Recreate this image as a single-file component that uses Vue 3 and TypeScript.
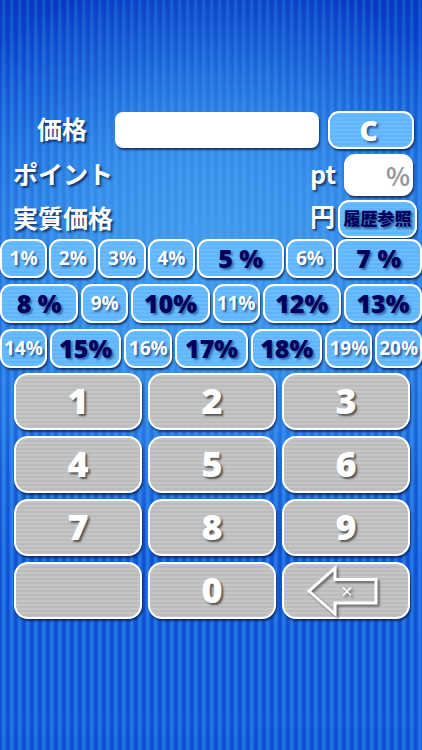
<script setup lang="ts">
import { ref } from 'vue'

interface RateKey {
  rate: number
  major: boolean
  label: string
}

const majors = [5, 7, 8, 10, 12, 13, 15, 17, 18]
const makeRow = (from: number, to: number): RateKey[] =>
  Array.from({ length: to - from + 1 }, (_, i) => {
    const rate = from + i
    const major = majors.includes(rate)
    return { rate, major, label: major && rate < 10 ? `${rate} %` : `${rate}%` }
  })

const rateRows = [
  { name: 'first', keys: makeRow(1, 7) },
  { name: 'second', keys: makeRow(8, 13) },
  { name: 'third', keys: makeRow(14, 20) },
]
const digits = ['1', '2', '3', '4', '5', '6', '7', '8', '9', '', '0']

const price = ref('')
const rate = ref('')

function press(digit: string) {
  price.value += digit
}
function clearAll() {
  price.value = ''
  rate.value = ''
}
function erase() {
  price.value = price.value.slice(0, -1)
}
</script>

<template>
  <main class="app">
    <section class="form">
      <div class="line price-line">
        <label class="caption price-caption" for="price">価格</label>
        <input id="price" v-model="price" class="field price-field" type="text" inputmode="numeric" />
        <button class="key clear" type="button" @click="clearAll">C</button>
      </div>
      <div class="line point-line">
        <label class="caption" for="rate">ポイント</label>
        <span class="caption unit">pt</span>
        <input id="rate" v-model="rate" class="field rate-field" type="text" placeholder="%" />
      </div>
      <div class="line net-line">
        <span class="caption">実質価格</span>
        <span class="caption unit yen">円</span>
        <button class="key history" type="button">履歴参照</button>
      </div>
    </section>

    <section class="rates">
      <div v-for="row in rateRows" :key="row.name" class="rate-row" :class="row.name">
        <button
          v-for="k in row.keys"
          :key="k.rate"
          class="key rate"
          :class="{ major: k.major }"
          type="button"
          @click="rate = String(k.rate)"
        >{{ k.label }}</button>
      </div>
    </section>

    <section class="pad">
      <button v-for="d in digits" :key="d" class="key digit" type="button" @click="press(d)">{{ d }}</button>
      <button class="key digit erase" type="button" @click="erase">
        <svg class="arrow" viewBox="0 0 76 56" width="76" height="56">
          <path d="M4 28 L30 5 V16.500 H71 V40 H30 V51 Z" fill="none" stroke="#fff" stroke-width="3" />
          <path d="M38 24.500 L46 32.500 M46 24.500 L38 32.500" stroke="#fff" stroke-width="1.500" />
        </svg>
      </button>
    </section>
  </main>
</template>

<style>
body {
  margin: 0;
}
</style>

<style scoped>
.app {
  box-sizing: border-box;
  min-height: 100vh;
  padding-top: 110px;
  font-family: "Noto Sans", "Noto Sans CJK JP", sans-serif;
  background:
    radial-gradient(ellipse 75% 38% at 50% 34%, rgba(76, 168, 242, 0.8) 0%, rgba(68, 160, 240, 0.7) 40%, rgba(50, 138, 234, 0.35) 75%, rgba(40, 125, 228, 0) 100%),
    linear-gradient(rgba(0, 30, 170, 0.2), rgba(0, 30, 170, 0) 20%),
    repeating-linear-gradient(90deg, rgba(0, 40, 185, 0.4) 0 1px, rgba(0, 40, 180, 0.15) 1px 2px, rgba(90, 170, 255, 0.1) 2px 3px, rgba(90, 180, 255, 0.2) 3px 5px, rgba(0, 40, 180, 0.1) 5px 6px, rgba(0, 40, 180, 0.2) 6px 7px, rgba(0, 40, 185, 0.4) 7px 8px),
    linear-gradient(#0c4ccf, #1a69df 15%, #2a80e6 30%, #2a80e6 55%, #1a6ae0 75%, #1766dc);
}
.line {
  display: flex;
  align-items: center;
}
.price-line {
  height: 40px;
  padding-right: 8px;
}
.point-line {
  height: 50px;
  padding: 0 9px 0 13px;
}
.net-line {
  height: 38px;
  padding: 0 5px 0 13px;
}
.caption {
  padding-bottom: 4px;
  color: #fff;
  font-family: "Noto Sans CJK JP", sans-serif;
  font-size: 25px;
  font-weight: 700;
  line-height: 34px;
  white-space: nowrap;
  text-shadow: 2px 2px 2px rgba(10, 30, 70, 0.75);
}
.price-caption {
  width: 115px;
  padding-left: 37px;
  box-sizing: border-box;
}
.unit {
  margin-left: auto;
  margin-right: 8px;
}
.yen {
  margin-right: 3px;
  padding-bottom: 8px;
}
.field {
  box-sizing: border-box;
  min-width: 0;
  border: 0;
  outline: 0;
  background: #fff;
  box-shadow: 1px 2px 2px rgba(10, 30, 70, 0.75);
  font: 700 25px "Noto Sans CJK JP", sans-serif;
  text-align: right;
}
.field::placeholder {
  color: #999;
  opacity: 1;
}
.price-field {
  flex: 1;
  height: 36px;
  margin-right: 9px;
  padding: 0 6px;
  border-radius: 8px;
}
.rate-field {
  width: 69px;
  height: 42px;
  padding: 0 3px;
  border-radius: 11px;
}
.key {
  box-sizing: border-box;
  min-width: 0;
  margin: 0;
  padding: 0;
  border: 2px solid #fff;
  border-radius: 11px;
  color: #fff;
  font-family: "Noto Sans", "Noto Sans CJK JP", sans-serif;
  font-weight: 700;
  white-space: nowrap;
  background: repeating-linear-gradient(#69bcff 0 2px, #60b5fb 2px 4px);
  box-shadow: 1px 2px 2px rgba(10, 30, 70, 0.75);
  text-shadow: 2px 2px 2px rgba(10, 40, 90, 0.65);
}
.clear {
  width: 86px;
  height: 38px;
  padding-right: 5px;
  font-family: "Open Sans", sans-serif;
  font-size: 28px;
  font-weight: 800;
  line-height: 30px;
}
.history {
  width: 79px;
  height: 38px;
  padding-bottom: 3px;
  color: #00005c;
  font-family: "Noto Sans CJK JP", sans-serif;
  font-size: 17px;
  font-weight: 900;
}
.rates {
  display: grid;
  gap: 6px;
  padding-top: 1px;
}
.rate-row {
  display: grid;
  gap: 2px;
}
.first {
  grid-template-columns: 47fr 47fr 47fr 47fr 87fr 47fr 86fr;
}
.second {
  grid-template-columns: 78fr 47fr 78fr 47fr 78fr 78fr;
  gap: 3px;
}
.third {
  grid-template-columns: 47fr 72fr 48fr 73fr 72fr 47fr 47fr;
  gap: 3px;
}
.rate {
  height: 39px;
  padding-bottom: 2px;
  font-family: "Open Sans", "Noto Sans", sans-serif;
  font-size: 19px;
  line-height: 32px;
}
.major {
  color: #00005c;
  font-family: "Open Sans", sans-serif;
  font-size: 25px;
  font-weight: 800;
  text-shadow: 2px 2px 2px rgba(10, 40, 90, 0.5);
}
.pad {
  display: grid;
  grid-template-columns: repeat(3, 1fr);
  gap: 6px;
  padding: 5px 12px 0 14px;
}
.digit {
  display: flex;
  align-items: center;
  justify-content: center;
  height: 57px;
  padding-bottom: 2px;
  border-radius: 14px;
  font-family: "Open Sans", sans-serif;
  font-size: 36px;
  font-weight: 800;
  line-height: 48px;
  background: repeating-linear-gradient(#c5c5c5 0 2px, #bcbcbc 2px 4px);
  text-shadow: 2px 2px 2px rgba(40, 40, 40, 0.7);
}
.erase {
  padding-bottom: 0;
}
.arrow {
  display: block;
  margin-right: 6px;
  filter: drop-shadow(2px 2px 1px rgba(40, 40, 40, 0.6));
}
</style>
